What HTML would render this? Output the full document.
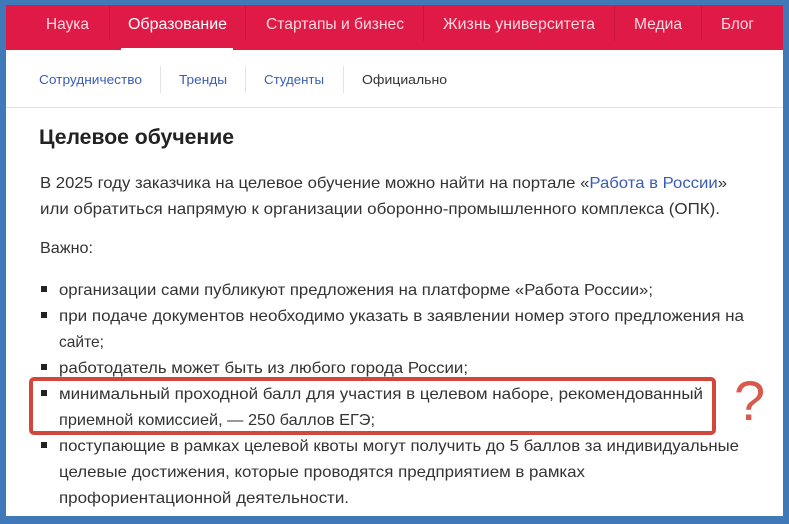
<!DOCTYPE html>
<html><head><meta charset="utf-8"><style>
html,body{margin:0;padding:0;background:#3f79b8;width:789px;height:524px;overflow:hidden}
svg{display:block}
text{font-family:"Liberation Sans",sans-serif}
</style></head><body>
<svg width="789" height="524" viewBox="0 0 789 524" xmlns="http://www.w3.org/2000/svg">
<rect x="0" y="0" width="789" height="524" fill="#3f79b8"/>
<rect x="6" y="5" width="777" height="511" fill="#ffffff"/>
<rect x="6" y="5" width="777" height="45" fill="#e01a46"/>
<g stroke="#c8153c" stroke-width="1">
<line x1="109.5" y1="6" x2="109.5" y2="41"/><line x1="245.5" y1="6" x2="245.5" y2="41"/>
<line x1="423.5" y1="6" x2="423.5" y2="41"/><line x1="614.5" y1="6" x2="614.5" y2="41"/>
<line x1="701.5" y1="6" x2="701.5" y2="41"/></g>
<rect x="121" y="48" width="112" height="3" fill="#fff"/>
<g font-size="16" fill="#fbd9e0">
<text x="46" y="29" textLength="43" lengthAdjust="spacingAndGlyphs">Наука</text>
<text x="128" y="29" textLength="99" lengthAdjust="spacingAndGlyphs" fill="#fff">Образование</text>
<text x="266" y="29" textLength="138" lengthAdjust="spacingAndGlyphs">Стартапы и бизнес</text>
<text x="443" y="29" textLength="152" lengthAdjust="spacingAndGlyphs">Жизнь университета</text>
<text x="634" y="29" textLength="48" lengthAdjust="spacingAndGlyphs">Медиа</text>
<text x="721" y="29" textLength="33" lengthAdjust="spacingAndGlyphs">Блог</text>
</g>
<g stroke="#e4e4e4"><line x1="160.5" y1="66" x2="160.5" y2="93"/><line x1="245.5" y1="66" x2="245.5" y2="93"/><line x1="343.5" y1="66" x2="343.5" y2="93"/>
<line x1="6" y1="107.5" x2="783" y2="107.5"/></g>
<g font-size="13" fill="#3a5cb5">
<text x="39" y="84" textLength="103" lengthAdjust="spacingAndGlyphs">Сотрудничество</text>
<text x="179" y="84" textLength="48" lengthAdjust="spacingAndGlyphs">Тренды</text>
<text x="264" y="84" textLength="60" lengthAdjust="spacingAndGlyphs">Студенты</text>
<text x="362" y="84" textLength="85" lengthAdjust="spacingAndGlyphs" fill="#333">Официально</text>
</g>
<text x="39" y="144" font-size="21" font-weight="bold" fill="#222" textLength="195" lengthAdjust="spacingAndGlyphs">Целевое обучение</text>
<g font-size="16" fill="#333">
<text x="40" y="188" textLength="687" lengthAdjust="spacingAndGlyphs">В 2025 году заказчика на целевое обучение можно найти на портале «<tspan fill="#3a5cb5">Работа в России</tspan>»</text>
<text x="40" y="214" textLength="680" lengthAdjust="spacingAndGlyphs">или обратиться напрямую к организации оборонно-промышленного комплекса (ОПК).</text>
<text x="40" y="253" textLength="53" lengthAdjust="spacingAndGlyphs">Важно:</text>
<text x="59" y="295" textLength="594" lengthAdjust="spacingAndGlyphs">организации сами публикуют предложения на платформе «Работа России»;</text>
<text x="59" y="321" textLength="685" lengthAdjust="spacingAndGlyphs">при подаче документов необходимо указать в заявлении номер этого предложения на</text>
<text x="59" y="347" textLength="45" lengthAdjust="spacingAndGlyphs">сайте;</text>
<text x="59" y="373" textLength="409" lengthAdjust="spacingAndGlyphs">работодатель может быть из любого города России;</text>
<text x="59" y="399" textLength="644" lengthAdjust="spacingAndGlyphs">минимальный проходной балл для участия в целевом наборе, рекомендованный</text>
<text x="59" y="425" textLength="316" lengthAdjust="spacingAndGlyphs">приемной комиссией, — 250 баллов ЕГЭ;</text>
<text x="59" y="451" textLength="680" lengthAdjust="spacingAndGlyphs">поступающие в рамках целевой квоты могут получить до 5 баллов за индивидуальные</text>
<text x="59" y="477" textLength="526" lengthAdjust="spacingAndGlyphs">целевые достижения, которые проводятся предприятием в рамках</text>
<text x="59" y="503" textLength="290" lengthAdjust="spacingAndGlyphs">профориентационной деятельности.</text>
</g>
<g fill="#222">
<rect x="41" y="286" width="6" height="6"/><rect x="41" y="312" width="6" height="6"/>
<rect x="41" y="364" width="6" height="6"/><rect x="41" y="390" width="6" height="6"/>
<rect x="41" y="442" width="6" height="6"/></g>
<rect x="31" y="379" width="683" height="54" rx="3" fill="none" stroke="#d2463c" stroke-width="4"/>
<text x="734" y="420" font-size="56" fill="#d85a4c">?</text>
</svg>
</body></html>
